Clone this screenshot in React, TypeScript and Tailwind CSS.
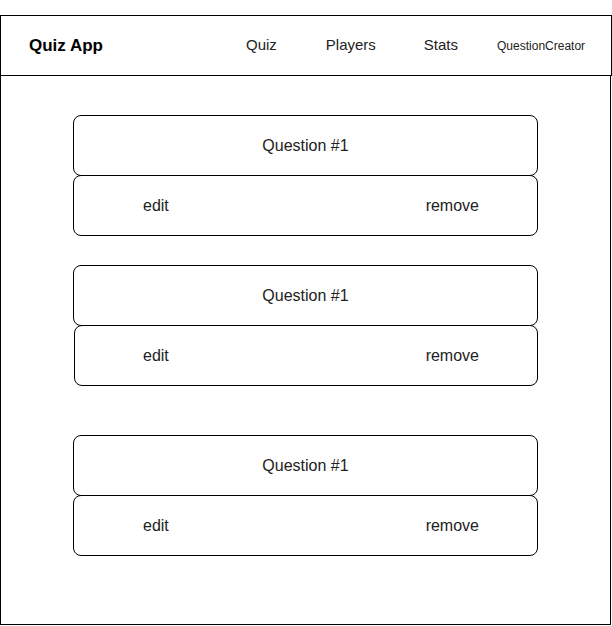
const font = { fontFamily: '"Liberation Sans", Arial, sans-serif' };

function QuestionCard({ shift = false }: { shift?: boolean }) {
  return (
    <div className="flex flex-col w-[465px]">
      <div className="h-[61px] border border-black rounded-[8px] flex items-center justify-center text-[16px] text-[#222]">
        Question #1
      </div>
      <div
        className={`h-[61px] -mt-px border border-black rounded-[8px] flex items-center justify-between pr-[58px] text-[16px] text-[#222] ${
          shift ? "ml-px pl-[68px]" : "pl-[69px]"
        }`}
      >
        <span>edit</span>
        <span>remove</span>
      </div>
    </div>
  );
}

export default function App() {
  return (
    <div className="w-[612px] h-[626px] bg-white" style={font}>
      <div className="pt-[15px]">
        <header className="h-[61px] w-[612px] border border-black flex items-center text-black">
          <span className="ml-[28px] text-[17px] font-bold">Quiz App</span>
          <nav className="flex items-center ml-[143px] text-[15px] text-[#222]">
            <span>Quiz</span>
            <span className="ml-[49px]">Players</span>
            <span className="ml-[48px]">Stats</span>
            <span className="ml-[39px] text-[12px]">QuestionCreator</span>
          </nav>
        </header>
        <main className="w-[611px] h-[549px] border-x border-b border-black pt-[39px] pl-[72px]">
          <QuestionCard />
          <div className="mt-[29px]">
            <QuestionCard shift />
          </div>
          <div className="mt-[49px]">
            <QuestionCard />
          </div>
        </main>
      </div>
    </div>
  );
}
